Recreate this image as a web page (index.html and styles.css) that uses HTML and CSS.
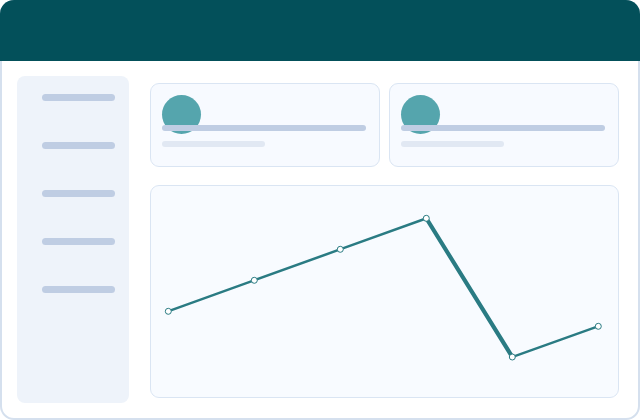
FILE: index.html
```html
<!DOCTYPE html>
<html lang="en">
<head>
    <meta charset="UTF-8">
    <meta name="viewport" content="width=device-width, initial-scale=1.0">
    <title>Dashboard</title>
    <link rel="stylesheet" href="styles.css">
</head>
<body>

<div class="window">
    <div class="topbar"></div>

    <div class="main">
        <div class="sidebar">
            <div class="nav-item"></div>
            <div class="nav-item"></div>
            <div class="nav-item"></div>
            <div class="nav-item"></div>
            <div class="nav-item"></div>
        </div>

        <div class="content">
            <div class="cards">
                <div class="card">
                    <div class="avatar"></div>
                    <div class="line"></div>
                    <div class="line short"></div>
                </div>
                <div class="card">
                    <div class="avatar"></div>
                    <div class="line"></div>
                    <div class="line short"></div>
                </div>
            </div>

            <div class="chart">
                <svg viewBox="0 0 467 211" width="467" height="211">
                    <!-- line is drawn on a 0-100 grid stretched to the box -->
                    <svg width="467" height="211" viewBox="0 0 100 100" preserveAspectRatio="none">
                        <polyline class="trend" points="3.704,59.38 22.12,44.69 40.54,30 58.95,15.31 77.37,81.04 95.78,66.49"/>
                    </svg>
                    <circle class="dot" cx="17.3" cy="125.3" r="3"/>
                    <circle class="dot" cx="103.3" cy="94.3" r="3"/>
                    <circle class="dot" cx="189.3" cy="63.3" r="3"/>
                    <circle class="dot" cx="275.3" cy="32.3" r="3"/>
                    <circle class="dot" cx="361.3" cy="171" r="3"/>
                    <circle class="dot" cx="447.3" cy="140.3" r="3"/>
                </svg>
            </div>
        </div>
    </div>
</div>

</body>
</html>
```

FILE: styles.css
```css
body {
    margin: 0;
    font-family: "Liberation Sans", Arial, sans-serif;
    background-color: #fff;
}
.window {
    width: 640px;
    height: 420px;
    box-sizing: border-box;
    border-radius: 14px;
    overflow: hidden;
    background-color: #fff;
    box-shadow: inset 0 0 0 2px #d5e0ee;
}
.topbar {
    height: 61px;
    background-color: #03505a;
}
.main {
    display: flex;
    gap: 21px;
    padding: 15px 0 0 17px;
}
.sidebar {
    width: 112px;
    height: 327px;
    box-sizing: border-box;
    padding: 18px 0 0 25px;
    background-color: #eef3fa;
    border-radius: 8px;
    display: flex;
    flex-direction: column;
    gap: 41px;
}
.nav-item {
    width: 73px;
    height: 7px;
    border-radius: 4px;
    background-color: #bfcde3;
}
.content {
    width: 469px;
    padding-top: 7px;
}
.cards {
    display: grid;
    grid-template-columns: 1fr 1fr;
    gap: 9px;
}
.card {
    height: 84px;
    box-sizing: border-box;
    padding: 11px;
    background-color: #f7faff;
    border: 1px solid #dae5f3;
    border-radius: 9px;
}
.avatar {
    width: 39px;
    height: 39px;
    border-radius: 50%;
    background-color: #55a5ad;
}
.line {
    position: relative;
    width: 204px;
    height: 6px;
    margin-top: -9px;
    border-radius: 3px;
    background-color: #bfcde3;
}
.line.short {
    width: 103px;
    margin-top: 10px;
    background-color: #e1e8f3;
}
.chart {
    margin-top: 18px;
    height: 213px;
    box-sizing: border-box;
    background-color: #f8fbff;
    border: 1px solid #dae5f3;
    border-radius: 9px;
}
.chart svg {
    display: block;
    overflow: visible;
}
.trend {
    fill: none;
    stroke: #2a7b83;
    stroke-width: 1;
    stroke-linejoin: round;
}
.dot {
    fill: #fff;
    stroke: #2a7b83;
    stroke-width: 1;
}
```
